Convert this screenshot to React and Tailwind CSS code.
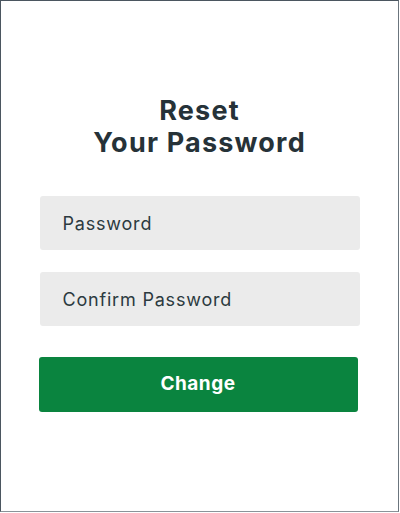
import React from 'react';

export default function App() {
    return (
        <div className="w-[400px] h-[513px] bg-white" style={{ fontFamily: 'Inter, "Noto Sans", sans-serif' }}>
            <div className="w-[399px] h-[512px] border border-[#4b5660] border-r-[#6b757d] border-b-[#8a9399] flex flex-col items-center">
                {/* Title */}
                <h1 className="mt-[94px] text-[27px] leading-[32px] font-bold tracking-[1.2px] text-[#263238] text-center">
                    Reset<br />Your Password
                </h1>

                {/* Form */}
                <div className="mt-[37px] w-[320px] flex flex-col">
                    <input
                        type="password"
                        placeholder="Password"
                        className="h-[54px] w-full rounded-[3px] bg-[#ebebeb] px-[23px] text-[18px] tracking-[0.8px] text-[#263238] placeholder:text-[#2c3a40] outline-none"
                    />
                    <input
                        type="password"
                        placeholder="Confirm Password"
                        className="mt-[22px] h-[54px] w-full rounded-[3px] bg-[#ebebeb] px-[23px] text-[18px] tracking-[0.8px] text-[#263238] placeholder:text-[#2c3a40] outline-none"
                    />
                    <button className="mt-[31px] -ml-px h-[55px] w-[319px] rounded-[3px] bg-[#0a843f] text-white text-[19px] font-bold tracking-[0.5px]">
                        Change
                    </button>
                </div>
            </div>
        </div>
    );
}
